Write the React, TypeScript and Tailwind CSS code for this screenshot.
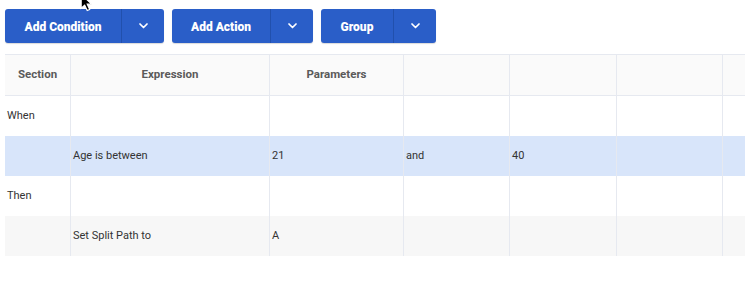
import React from 'react';

const cols = ['w-[66px]', 'w-[199px]', 'w-[134px]', 'w-[106px]', 'w-[107px]', 'w-[106px]', 'w-[106px]'];

type Row = { cells: string[]; bg: string };

const rows: Row[] = [
  { cells: ['When', '', '', '', '', '', ''], bg: 'bg-white' },
  { cells: ['', 'Age is between', '21', 'and', '40', '', ''], bg: 'bg-[#d8e5fa]' },
  { cells: ['Then', '', '', '', '', '', ''], bg: 'bg-white' },
  { cells: ['', 'Set Split Path to', 'A', '', '', '', ''], bg: 'bg-[#f7f7f7]' },
];

function Chevron() {
  return (
    <svg width="9" height="6" viewBox="0 0 9 6" fill="none">
      <path d="M1 1 L4.5 4.5 L8 1" stroke="white" strokeWidth="1.7" strokeLinecap="round" strokeLinejoin="round" />
    </svg>
  );
}

function SplitButton({ label, mainWidth }: { label: string; mainWidth: string }) {
  return (
    <div className="flex h-[34px] rounded-[3px] bg-[#2a5ec8] text-white shadow-[0_1px_1px_rgba(0,0,0,0.15)]">
      <div className={`${mainWidth} flex items-center justify-center pt-[1px] text-[12px] font-black`}>{label}</div>
      <div className="w-[43px] flex items-center justify-center border-l border-[#2150ad]">
        <Chevron />
      </div>
    </div>
  );
}

export default function App() {
  return (
    <div className="relative w-[745px] h-[291px] overflow-hidden bg-white font-['Roboto',sans-serif]">
      <div className="flex gap-2 pl-[5px] pt-[9px]">
        <SplitButton label="Add Condition" mainWidth="w-[116px]" />
        <SplitButton label="Add Action" mainWidth="w-[98px]" />
        <SplitButton label="Group" mainWidth="w-[72px]" />
      </div>

      <div className="ml-[5px] mt-[11px] w-[830px]">
        <div className="flex h-[42px] border-y border-[#e6e9f0] bg-[#fafafa] text-[11.5px] font-bold text-[#5a5a5a]">
          {['Section', 'Expression', 'Parameters', '', '', '', ''].map((h, i) => (
            <div key={i} className={`${cols[i]} shrink-0 flex items-center justify-center border-r border-[#e6e9f0]`}>
              {h}
            </div>
          ))}
        </div>
        {rows.map((r, ri) => (
          <div key={ri} className={`flex h-[40px] ${r.bg} text-[11px] text-[#333]`}>
            {r.cells.map((c, i) => (
              <div key={i} className={`${cols[i]} shrink-0 flex items-center border-r border-[#e6e9f0] pl-[2px]`}>
                {c}
              </div>
            ))}
          </div>
        ))}
      </div>

      <svg className="absolute left-[80px] top-[-7px]" width="14" height="20" viewBox="0 0 12 17">
        <path d="M1 1 L1 13 L4 10.3 L6.2 15 L8.3 14 L6.2 9.5 L10 9.5 Z" fill="black" stroke="white" strokeWidth="1" />
      </svg>
    </div>
  );
}
